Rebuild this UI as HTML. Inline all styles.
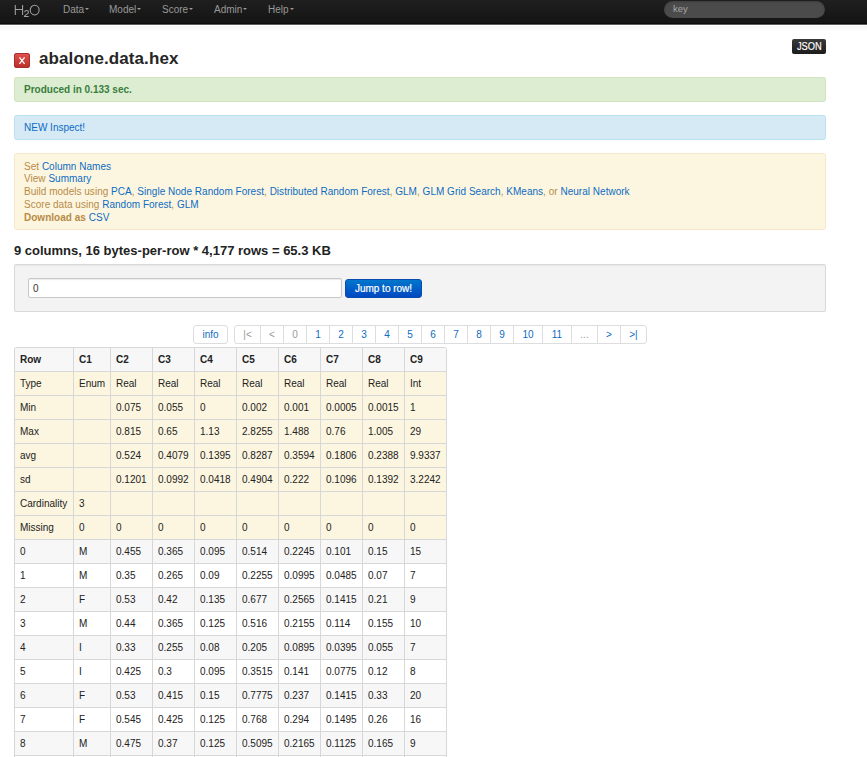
<!DOCTYPE html>
<html><head><meta charset="utf-8">
<style>
*{box-sizing:border-box;margin:0;padding:0}
html,body{width:867px;height:757px;overflow:hidden;background:#fff}
body{font-family:"Liberation Sans",sans-serif;font-size:10px;color:#333;position:relative}
.abs{position:absolute}
#nav{left:0;top:0;width:867px;height:24px;background:linear-gradient(#1f1f1f,#141414);border-bottom:1px solid #0a0a0a}
#nav2{left:0;top:24px;width:867px;height:1px;background:#5a5a5a}
#nav3{left:0;top:26px;width:867px;height:6px;background:linear-gradient(rgba(0,0,0,.045),rgba(0,0,0,0))}
#brand{left:14px;top:1px;font-size:14.5px;color:#8f8f8f;letter-spacing:-0.3px;line-height:18px}
#brand sub{font-size:8.5px;vertical-align:-2px;line-height:0}
.menu{top:0;height:24px;line-height:20px;color:#999;font-size:10px;white-space:nowrap}
.caret{display:inline-block;width:0;height:0;border-top:2.5px solid #999;border-left:2.5px solid transparent;border-right:2.5px solid transparent;vertical-align:3.5px;margin-left:1px}
#search{left:664px;top:1px;width:161px;height:17px;border-radius:9px;background:#4b4b4b;color:#a5a5a5;padding-left:9px;line-height:15px;font-size:9.5px;box-shadow:inset 0 1px 2px rgba(0,0,0,.2)}
#xbtn{left:14px;top:53px;width:16px;height:15px;border-radius:2px;background:linear-gradient(#e0504c,#bb2f2b);color:#fff;font-size:10px;line-height:14px;text-align:center;border:1px solid #a8302b}
#title{left:39px;top:49px;font-size:17px;font-weight:bold;color:#262626;line-height:20px;white-space:nowrap;letter-spacing:0.1px}
#json{left:792px;top:39px;width:34px;height:15px;border-radius:2px;background:linear-gradient(#3a3a3a,#1c1c1c);color:#fff;font-size:10px;line-height:16px;text-align:center;-webkit-text-stroke:0.15px #fff}
#json span{display:inline-block;transform:scaleX(0.93)}
.alert{left:14px;width:812px;border-radius:2.5px;border:1px solid}
#a1{top:77px;height:25px;background:#dcedd2;border-color:#cfe5bf;color:#3a7d3c;font-weight:bold;padding-left:9px;line-height:24px}
#a2{top:115px;height:25px;background:#d6eaf6;border-color:#b9e2f0;color:#0d6cc2;padding-left:9px;line-height:24px}
#a3{top:153px;height:77px;background:#fcf6e1;border-color:#f8e7ca;letter-spacing:0.02px;color:#b88a45;padding:6.5px 0 0 9px;line-height:12.9px}
a{color:#0d6cc2;text-decoration:none}
#h4{left:14px;top:243px;font-size:13px;font-weight:bold;color:#222;line-height:16px;white-space:nowrap}
#well{left:14px;top:264px;width:812px;height:48px;background:#f3f3f3;border:1px solid #d9d9d9;border-radius:2px;box-shadow:inset 0 1px 1px rgba(0,0,0,.05)}
#inp{left:28px;top:278px;width:314px;height:20px;background:#fff;border:1px solid #c8c8c8;border-radius:2px;box-shadow:inset 0 1px 1px rgba(0,0,0,.08);padding-left:4px;line-height:20px;color:#333}
#jump{left:345px;top:279px;width:77px;height:19px;border-radius:3px;background:linear-gradient(#0077cc,#0048c2);border:1px solid #0a4bb0;color:#fff;text-align:center;line-height:18px;font-size:10px;-webkit-text-stroke:0.2px #fff}
#info{left:193px;top:325px;width:35px;height:19px;border:1px solid #ddd;border-radius:3px;text-align:center;line-height:17px;color:#0d6cc2}
#pag{left:234px;top:325px;height:19px;border:1px solid #ddd;border-radius:3px;display:flex}
#pag span{display:block;height:17px;line-height:18px;text-align:center;border-left:1px solid #ddd;color:#0d6cc2}
#pag span:first-child{border-left:0}
#pag span.d{color:#999}
table{position:absolute;left:14px;top:347px;border-collapse:separate;border-spacing:0;border:1px solid #d7d7d7;border-left:0;table-layout:fixed;width:432px;border-radius:3px}
td,th{border-left:1px solid #d7d7d7;border-top:1px solid #d7d7d7;height:24px;padding:0 0 0 5px;text-align:left;white-space:nowrap;overflow:hidden;font-size:10px;line-height:22px;padding-top:1px;color:#222}
tr:first-child th{border-top:0;height:23px}
th{background:#f7f7f7;font-weight:bold;color:#222}
tr.w td{background:#fcf6e0}
tr.s td{background:#f7f7f7}
</style></head><body>
<div id="nav" class="abs"></div><div id="nav2" class="abs"></div><div id="nav3" class="abs"></div>
<svg class="abs" style="left:0;top:0" width="44" height="22"><g stroke="#a3a3a3" stroke-width="1.05" fill="none"><path d="M15.3 5v10.1M22.6 5v10.1M15.3 9.5h7.3"/><ellipse cx="34.65" cy="10.05" rx="4.45" ry="4.85"/><path d="M24.6 12.3c0.1-1.2 1-1.8 2-1.8c1.1 0 1.9 .7 1.9 1.7c0 1.9-3.8 2.3-4.1 4.3h4.3"/></g></svg>
<div class="abs menu" style="left:63px">Data<span class="caret"></span></div>
<div class="abs menu" style="left:109px">Model<span class="caret"></span></div>
<div class="abs menu" style="left:162px">Score<span class="caret"></span></div>
<div class="abs menu" style="left:214px">Admin<span class="caret"></span></div>
<div class="abs menu" style="left:268px">Help<span class="caret"></span></div>
<div id="search" class="abs">key</div>

<div id="xbtn" class="abs"></div><svg class="abs" style="left:14px;top:53px" width="16" height="15"><path d="M5.4 4.3L10.6 10.9M10.6 4.3L5.4 10.9" stroke="#fff" stroke-width="1.35" fill="none"/></svg>
<div id="title" class="abs">abalone.data.hex</div>
<div id="json" class="abs"><span>JSON</span></div>

<div id="a1" class="abs alert">Produced in 0.133 sec.</div>
<div id="a2" class="abs alert">NEW Inspect!</div>
<div id="a3" class="abs alert">Set <a>Column Names</a><br>View <a>Summary</a><br>Build models using <a>PCA</a>, <a>Single Node Random Forest</a>, <a>Distributed Random Forest</a>, <a>GLM</a>, <a>GLM Grid Search</a>, <a>KMeans</a>, or <a>Neural Network</a><br>Score data using <a>Random Forest</a>, <a>GLM</a><br><b>Download as</b> <a>CSV</a></div>

<div id="h4" class="abs">9 columns, 16 bytes-per-row * 4,177 rows = 65.3 KB</div>
<div id="well" class="abs"></div>
<div id="inp" class="abs">0</div>
<div id="jump" class="abs">Jump to row!</div>

<div id="info" class="abs">info</div>
<div id="pag" class="abs">
<span class="d" style="width:25px">|&lt;</span><span class="d" style="width:23px">&lt;</span><span class="d" style="width:23px">0</span><span style="width:23px">1</span><span style="width:23px">2</span><span style="width:23px">3</span><span style="width:23px">4</span><span style="width:23px">5</span><span style="width:23px">6</span><span style="width:23px">7</span><span style="width:23px">8</span><span style="width:23px">9</span><span style="width:29px">10</span><span style="width:29px">11</span><span class="d" style="width:26px">...</span><span style="width:23px">&gt;</span><span style="width:26px">&gt;|</span>
</div>

<table>
<colgroup><col style="width:59px"><col style="width:37px"><col style="width:42px"><col style="width:42px"><col style="width:42px"><col style="width:42px"><col style="width:42px"><col style="width:42px"><col style="width:42px"><col style="width:42px"></colgroup>
<tr><th>Row</th><th>C1</th><th>C2</th><th>C3</th><th>C4</th><th>C5</th><th>C6</th><th>C7</th><th>C8</th><th>C9</th></tr>
<tr class="w"><td>Type</td><td>Enum</td><td>Real</td><td>Real</td><td>Real</td><td>Real</td><td>Real</td><td>Real</td><td>Real</td><td>Int</td></tr>
<tr class="w"><td>Min</td><td></td><td>0.075</td><td>0.055</td><td>0</td><td>0.002</td><td>0.001</td><td>0.0005</td><td>0.0015</td><td>1</td></tr>
<tr class="w"><td>Max</td><td></td><td>0.815</td><td>0.65</td><td>1.13</td><td>2.8255</td><td>1.488</td><td>0.76</td><td>1.005</td><td>29</td></tr>
<tr class="w"><td>avg</td><td></td><td>0.524</td><td>0.4079</td><td>0.1395</td><td>0.8287</td><td>0.3594</td><td>0.1806</td><td>0.2388</td><td>9.9337</td></tr>
<tr class="w"><td>sd</td><td></td><td>0.1201</td><td>0.0992</td><td>0.0418</td><td>0.4904</td><td>0.222</td><td>0.1096</td><td>0.1392</td><td>3.2242</td></tr>
<tr class="w"><td>Cardinality</td><td>3</td><td></td><td></td><td></td><td></td><td></td><td></td><td></td><td></td></tr>
<tr class="w"><td>Missing</td><td>0</td><td>0</td><td>0</td><td>0</td><td>0</td><td>0</td><td>0</td><td>0</td><td>0</td></tr>
<tr class="s"><td>0</td><td>M</td><td>0.455</td><td>0.365</td><td>0.095</td><td>0.514</td><td>0.2245</td><td>0.101</td><td>0.15</td><td>15</td></tr>
<tr><td>1</td><td>M</td><td>0.35</td><td>0.265</td><td>0.09</td><td>0.2255</td><td>0.0995</td><td>0.0485</td><td>0.07</td><td>7</td></tr>
<tr class="s"><td>2</td><td>F</td><td>0.53</td><td>0.42</td><td>0.135</td><td>0.677</td><td>0.2565</td><td>0.1415</td><td>0.21</td><td>9</td></tr>
<tr><td>3</td><td>M</td><td>0.44</td><td>0.365</td><td>0.125</td><td>0.516</td><td>0.2155</td><td>0.114</td><td>0.155</td><td>10</td></tr>
<tr class="s"><td>4</td><td>I</td><td>0.33</td><td>0.255</td><td>0.08</td><td>0.205</td><td>0.0895</td><td>0.0395</td><td>0.055</td><td>7</td></tr>
<tr><td>5</td><td>I</td><td>0.425</td><td>0.3</td><td>0.095</td><td>0.3515</td><td>0.141</td><td>0.0775</td><td>0.12</td><td>8</td></tr>
<tr class="s"><td>6</td><td>F</td><td>0.53</td><td>0.415</td><td>0.15</td><td>0.7775</td><td>0.237</td><td>0.1415</td><td>0.33</td><td>20</td></tr>
<tr><td>7</td><td>F</td><td>0.545</td><td>0.425</td><td>0.125</td><td>0.768</td><td>0.294</td><td>0.1495</td><td>0.26</td><td>16</td></tr>
<tr class="s"><td>8</td><td>M</td><td>0.475</td><td>0.37</td><td>0.125</td><td>0.5095</td><td>0.2165</td><td>0.1125</td><td>0.165</td><td>9</td></tr>
<tr><td>9</td><td>F</td><td>0.55</td><td>0.44</td><td>0.15</td><td>0.8945</td><td>0.3145</td><td>0.151</td><td>0.32</td><td>19</td></tr>
</table>
</body></html>
